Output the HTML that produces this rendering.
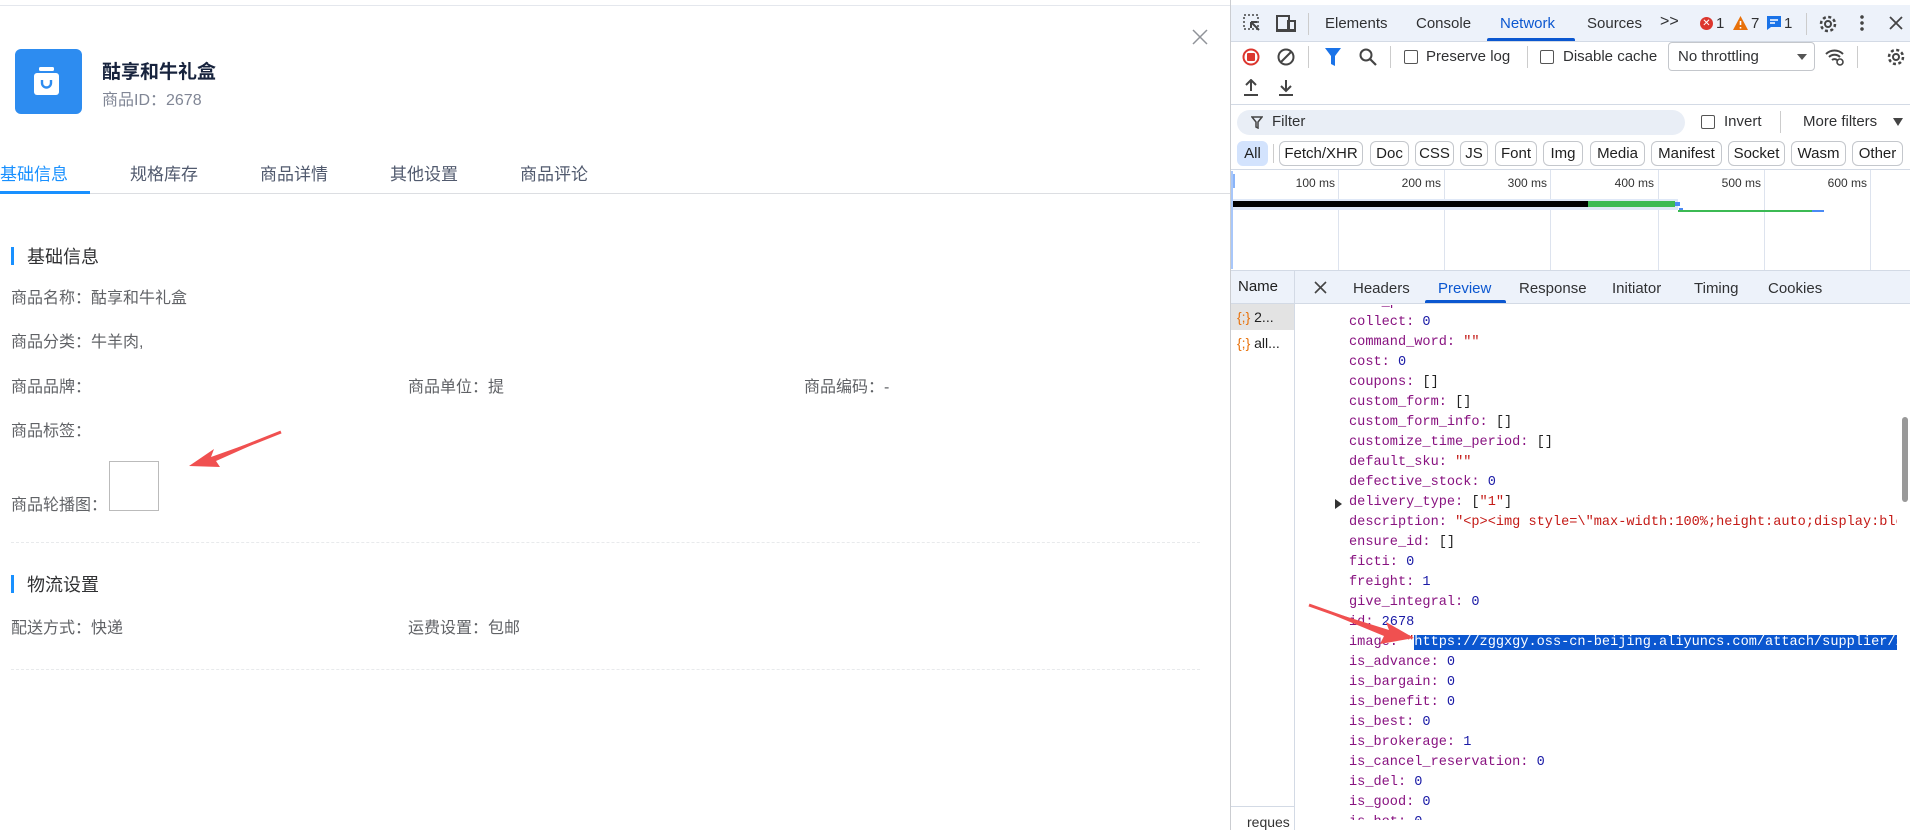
<!DOCTYPE html>
<html><head><meta charset="utf-8"><style>
*{margin:0;padding:0;box-sizing:border-box}
body{width:1910px;height:830px;overflow:hidden;background:#fff;position:relative;font-family:"Liberation Sans","Noto Sans CJK SC",sans-serif;}
.a{position:absolute;white-space:nowrap}
.l{font-size:16px;color:#606266}
.dt{font-size:15px;color:#303133}
.chip{position:absolute;top:141px;height:25px;border:1px solid #c4c7cc;border-radius:6px;font-size:15px;color:#1f1f1f;line-height:23px;text-align:center}
.gl{position:absolute;top:170px;width:1px;height:100px;background:#dde3ee}
.tl{position:absolute;font-size:12px;color:#333;text-align:right;width:60px}
.code{position:absolute;left:1349px;font-family:"Liberation Mono",monospace;font-size:13.6px;line-height:20px;color:#881280;white-space:nowrap}
.n{color:#1a1aa6}.s{color:#c41a16}.b{color:#222}
.cb{position:absolute;width:14px;height:14px;border:1.5px solid #555;border-radius:2px}
</style></head><body>
<div class="a" style="left:0;top:5px;width:1230px;height:1px;background:#e4e7ed"></div>
<svg class="a" style="left:1192px;top:29px" width="16" height="16"><path d="M1 1L15 15M15 1L1 15" stroke="#909399" stroke-width="1.5"/></svg>
<div class="a" style="left:15px;top:49px;width:67px;height:65px;background:#2d8cf0;border-radius:6px"></div>
<svg class="a" style="left:30px;top:62px" width="36" height="40"><rect x="4" y="11" width="25" height="22" rx="3" fill="#fff"/><rect x="9" y="5" width="15" height="4" rx="1.5" fill="#fff"/><path d="M12 18v3a4.5 4.5 0 0 0 9 0v-3" stroke="#2d8cf0" stroke-width="2.4" fill="none"/></svg>
<div class="a" style="left:102px;top:57px;font-size:19px;color:#17233d;font-weight:bold">酤享和牛礼盒</div>
<div class="a" style="left:102px;top:86px;font-size:16px;color:#808695">商品ID：2678</div>
<div class="a" style="left:0;top:160px;font-size:17px;color:#1890ff">基础信息</div>
<div class="a" style="left:130px;top:160px;font-size:17px;color:#515a6e">规格库存</div>
<div class="a" style="left:260px;top:160px;font-size:17px;color:#515a6e">商品详情</div>
<div class="a" style="left:390px;top:160px;font-size:17px;color:#515a6e">其他设置</div>
<div class="a" style="left:520px;top:160px;font-size:17px;color:#515a6e">商品评论</div>
<div class="a" style="left:0;top:193px;width:1230px;height:1px;background:#dcdee2"></div>
<div class="a" style="left:0;top:191px;width:90px;height:3px;background:#1890ff"></div>
<div class="a" style="left:11px;top:247px;width:3px;height:18px;background:#1890ff"></div>
<div class="a" style="left:27px;top:243px;font-size:18px;color:#303133">基础信息</div>
<div class="a l" style="left:11px;top:284px">商品名称：酤享和牛礼盒</div>
<div class="a l" style="left:11px;top:328px">商品分类：牛羊肉,</div>
<div class="a l" style="left:11px;top:373px">商品品牌：</div>
<div class="a l" style="left:408px;top:373px">商品单位：提</div>
<div class="a l" style="left:804px;top:373px">商品编码：-</div>
<div class="a l" style="left:11px;top:417px">商品标签：</div>
<div class="a l" style="left:11px;top:491px">商品轮播图：</div>
<div class="a" style="left:109px;top:461px;width:50px;height:50px;border:1px solid #bbb"></div>
<div class="a" style="left:11px;top:542px;width:1189px;border-top:1px dashed #e8eaec"></div>
<div class="a" style="left:11px;top:575px;width:3px;height:18px;background:#1890ff"></div>
<div class="a" style="left:27px;top:571px;font-size:18px;color:#303133">物流设置</div>
<div class="a l" style="left:11px;top:614px">配送方式：快递</div>
<div class="a l" style="left:408px;top:614px">运费设置：包邮</div>
<div class="a" style="left:11px;top:669px;width:1189px;border-top:1px dashed #e8eaec"></div>
<svg class="a" style="left:180px;top:425px" width="110" height="50"><path d="M101 7L31 32L34 24L9 41L40 42L36 36Z" fill="#f05050"/><path d="M101 7L33 34" stroke="#f05050" stroke-width="3"/></svg>

<div class="a" style="left:1230px;top:0;width:680px;height:830px;background:#fff;border-left:1px solid #cbcdd1"></div>
<div class="a" style="left:1231px;top:5px;width:679px;height:37px;background:#edf2fa;border-bottom:1px solid #d3dae5"></div>
<svg class="a" style="left:1243px;top:14px" width="20" height="20"><rect x="1" y="1" width="14" height="14" fill="none" stroke="#444" stroke-dasharray="2 2" stroke-width="1.5"/><path d="M8 8l8 8M8 8v6M8 8h6" stroke="#444" stroke-width="2" fill="none"/></svg>
<svg class="a" style="left:1276px;top:14px" width="22" height="20"><rect x="1" y="2" width="12" height="14" fill="none" stroke="#444" stroke-width="2"/><rect x="12" y="7" width="7" height="9" fill="none" stroke="#444" stroke-width="2"/><path d="M0 17h20" stroke="#444" stroke-width="2"/></svg>
<div class="a" style="left:1308px;top:13px;width:1px;height:22px;background:#ccc"></div>
<div class="a dt" style="left:1325px;top:15px">Elements</div>
<div class="a dt" style="left:1416px;top:15px">Console</div>
<div class="a dt" style="left:1500px;top:15px;color:#0b57d0">Network</div>
<div class="a" style="left:1487px;top:38px;width:88px;height:3px;background:#0b57d0;border-radius:2px 2px 0 0"></div>
<div class="a dt" style="left:1587px;top:15px">Sources</div>
<div class="a dt" style="left:1660px;top:13px;font-size:16px">&gt;&gt;</div>
<div class="a" style="left:1700px;top:17px;width:13px;height:13px;border-radius:50%;background:#dc362e;color:#fff;font-size:10px;line-height:13px;text-align:center">✕</div>
<div class="a dt" style="left:1716px;top:15px">1</div>
<svg class="a" style="left:1733px;top:16px" width="15" height="14"><path d="M7.5 0L15 14H0Z" fill="#e8710a"/><path d="M7.5 5v4M7.5 11v1.5" stroke="#fff" stroke-width="1.6"/></svg>
<div class="a dt" style="left:1751px;top:15px">7</div>
<svg class="a" style="left:1767px;top:16px" width="14" height="14"><path d="M0 0h14v11H4l-4 3z" fill="#1a73e8"/><path d="M3 4h8M3 7h5" stroke="#fff" stroke-width="1.4"/></svg>
<div class="a dt" style="left:1784px;top:15px">1</div>
<div class="a" style="left:1806px;top:13px;width:1px;height:22px;background:#ccc"></div>
<svg class="a" style="left:1818px;top:14px" width="20" height="20"><circle cx="10" cy="10" r="7" fill="none" stroke="#444" stroke-width="2.5" stroke-dasharray="3 2.5"/><circle cx="10" cy="10" r="3" fill="none" stroke="#444" stroke-width="2"/></svg>
<div class="a" style="left:1860px;top:14px;width:4px;height:18px;background:radial-gradient(circle,#444 1.6px,transparent 2px) 0 0/4px 6px"></div>
<svg class="a" style="left:1889px;top:16px" width="14" height="14"><path d="M1 1L13 13M13 1L1 13" stroke="#444" stroke-width="1.8"/></svg>
<svg class="a" style="left:1242px;top:48px" width="18" height="18"><circle cx="9" cy="9" r="7.5" fill="none" stroke="#dc362e" stroke-width="2"/><rect x="5" y="5" width="8" height="8" rx="1" fill="#dc362e"/></svg>
<svg class="a" style="left:1277px;top:48px" width="18" height="18"><circle cx="9" cy="9" r="7.5" fill="none" stroke="#444" stroke-width="2"/><path d="M4 14L14 4" stroke="#444" stroke-width="2"/></svg>
<div class="a" style="left:1308px;top:46px;width:1px;height:22px;background:#ccc"></div>
<svg class="a" style="left:1325px;top:48px" width="16" height="18"><path d="M0 0h16L10 8v10L6 16V8Z" fill="#1a73e8"/></svg>
<svg class="a" style="left:1359px;top:48px" width="18" height="18"><circle cx="7" cy="7" r="5.5" fill="none" stroke="#444" stroke-width="2"/><path d="M11 11l6 6" stroke="#444" stroke-width="2.2"/></svg>
<div class="a" style="left:1390px;top:46px;width:1px;height:22px;background:#ccc"></div>
<div class="cb" style="left:1404px;top:50px"></div>
<div class="a dt" style="left:1426px;top:48px">Preserve log</div>
<div class="a" style="left:1527px;top:46px;width:1px;height:22px;background:#ccc"></div>
<div class="cb" style="left:1540px;top:50px"></div>
<div class="a dt" style="left:1563px;top:48px">Disable cache</div>
<div class="a" style="left:1668px;top:42px;width:147px;height:29px;border:1px solid #c4c7cc;border-radius:4px"></div>
<div class="a dt" style="left:1678px;top:48px">No throttling</div>
<svg class="a" style="left:1797px;top:54px" width="10" height="6"><path d="M0 0h10L5 6z" fill="#555"/></svg>
<svg class="a" style="left:1824px;top:47px" width="22" height="20"><path d="M2 7a12 12 0 0 1 17 0M5 10a8 8 0 0 1 11 0M8 13a4 4 0 0 1 5 0" stroke="#444" stroke-width="2" fill="none"/><circle cx="16" cy="15" r="3" fill="none" stroke="#444" stroke-width="1.6"/></svg>
<div class="a" style="left:1857px;top:46px;width:1px;height:22px;background:#ccc"></div>
<svg class="a" style="left:1886px;top:47px" width="20" height="20"><circle cx="10" cy="10" r="7" fill="none" stroke="#444" stroke-width="2.5" stroke-dasharray="3 2.5"/><circle cx="10" cy="10" r="3" fill="none" stroke="#444" stroke-width="2"/></svg>
<svg class="a" style="left:1243px;top:79px" width="16" height="18"><path d="M8 1v11M3 6l5-5 5 5M1 16h14" stroke="#444" stroke-width="2" fill="none"/></svg>
<svg class="a" style="left:1278px;top:79px" width="16" height="18"><path d="M8 1v11M3 7l5 5 5-5M1 16h14" stroke="#444" stroke-width="2" fill="none"/></svg>
<div class="a" style="left:1231px;top:104px;width:679px;height:1px;background:#d3dae5"></div>
<div class="a" style="left:1237px;top:110px;width:448px;height:25px;border-radius:13px;background:#e9eef6"></div>
<svg class="a" style="left:1251px;top:116px" width="12" height="13"><path d="M1 1h10L7 6v6L5 11V6Z" fill="none" stroke="#444" stroke-width="1.5"/></svg>
<div class="a dt" style="left:1272px;top:113px">Filter</div>
<div class="cb" style="left:1701px;top:115px"></div>
<div class="a dt" style="left:1724px;top:113px">Invert</div>
<div class="a" style="left:1780px;top:111px;width:1px;height:22px;background:#ccc"></div>
<div class="a dt" style="left:1803px;top:113px">More filters</div>
<svg class="a" style="left:1893px;top:118px" width="10" height="8"><path d="M0 0h10L5 8z" fill="#444"/></svg>
<div class="chip" style="left:1237px;width:31px;background:#d3e3fd;border-color:#d3e3fd">All</div>
<div class="a" style="left:1273px;top:144px;width:1px;height:19px;background:#ccc"></div>
<div class="chip" style="left:1279px;width:84px">Fetch/XHR</div>
<div class="chip" style="left:1370px;width:39px">Doc</div>
<div class="chip" style="left:1415px;width:39px">CSS</div>
<div class="chip" style="left:1460px;width:28px">JS</div>
<div class="chip" style="left:1495px;width:42px">Font</div>
<div class="chip" style="left:1543px;width:40px">Img</div>
<div class="chip" style="left:1590px;width:55px">Media</div>
<div class="chip" style="left:1651px;width:71px">Manifest</div>
<div class="chip" style="left:1728px;width:57px">Socket</div>
<div class="chip" style="left:1791px;width:55px">Wasm</div>
<div class="chip" style="left:1852px;width:51px">Other</div>
<div class="a" style="left:1231px;top:169px;width:679px;height:1px;background:#d3dae5"></div>
<div class="gl" style="left:1338px"></div><div class="gl" style="left:1444px"></div><div class="gl" style="left:1550px"></div><div class="gl" style="left:1658px"></div><div class="gl" style="left:1764px"></div><div class="gl" style="left:1870px"></div>
<div class="a" style="left:1231px;top:171px;width:2px;height:98px;background:#a8c7fa"></div>
<div class="a" style="left:1233px;top:174px;width:2px;height:14px;background:#8ab4f8"></div>
<div class="tl" style="left:1275px;top:176px">100 ms</div><div class="tl" style="left:1381px;top:176px">200 ms</div><div class="tl" style="left:1487px;top:176px">300 ms</div><div class="tl" style="left:1594px;top:176px">400 ms</div><div class="tl" style="left:1701px;top:176px">500 ms</div><div class="tl" style="left:1807px;top:176px">600 ms</div>
<div class="a" style="left:1233px;top:199px;width:445px;height:11px;background:#dfe8f7"></div>
<div class="a" style="left:1233px;top:201px;width:355px;height:6px;background:#000"></div>
<div class="a" style="left:1588px;top:201px;width:87px;height:6px;background:#3cba54"></div>
<div class="a" style="left:1675px;top:202px;width:5px;height:4px;background:#4a8af4"></div>
<div class="a" style="left:1679px;top:208px;width:4px;height:2px;background:#4a8af4"></div>
<div class="a" style="left:1678px;top:210px;width:135px;height:2px;background:#3cba54"></div>
<div class="a" style="left:1812px;top:210px;width:12px;height:2px;background:#4a8af4"></div>
<div class="a" style="left:1231px;top:270px;width:679px;height:1px;background:#d3dae5"></div>
<div class="a" style="left:1231px;top:271px;width:679px;height:33px;background:#edf2fa;border-bottom:1px solid #d3dae5"></div>
<div class="a" style="left:1294px;top:271px;width:1px;height:559px;background:#d3dae5"></div>
<div class="a" style="left:1231px;top:304px;width:63px;height:26px;background:#e3e3e3"></div>
<div class="a dt" style="left:1238px;top:278px;color:#1f1f1f">Name</div>
<svg class="a" style="left:1314px;top:281px" width="13" height="13"><path d="M1 1L12 12M12 1L1 12" stroke="#444" stroke-width="1.6"/></svg>
<div class="a dt" style="left:1353px;top:280px">Headers</div>
<div class="a dt" style="left:1438px;top:280px;color:#0b57d0">Preview</div>
<div class="a" style="left:1425px;top:300px;width:81px;height:3px;background:#0b57d0;border-radius:2px 2px 0 0"></div>
<div class="a dt" style="left:1519px;top:280px">Response</div>
<div class="a dt" style="left:1612px;top:280px">Initiator</div>
<div class="a dt" style="left:1694px;top:280px">Timing</div>
<div class="a dt" style="left:1768px;top:280px">Cookies</div>
<div class="a" style="left:1237px;top:309px;font-size:14px;color:#1f1f1f"><span style="color:#e8710a">{;}</span> 2...</div>
<div class="a" style="left:1237px;top:335px;font-size:14px;color:#1f1f1f"><span style="color:#e8710a">{;}</span> all...</div>
<div class="a" style="left:1231px;top:806px;width:63px;height:1px;background:#d3dae5"></div>
<div class="a" style="left:1247px;top:814px;font-size:14px;color:#333">reques</div>
<div style="position:absolute;left:1295px;top:305px;width:602px;height:515px;overflow:hidden">
<div class="code" style="left:54px;top:-12px">
code_path:<br>
collect: <span class="n">0</span><br>
command_word: <span class="s">""</span><br>
cost: <span class="n">0</span><br>
coupons: <span class="b">[]</span><br>
custom_form: <span class="b">[]</span><br>
custom_form_info: <span class="b">[]</span><br>
customize_time_period: <span class="b">[]</span><br>
default_sku: <span class="s">""</span><br>
defective_stock: <span class="n">0</span><br>
delivery_type: <span class="b">[<span class="s">"1"</span>]</span><br>
description: <span class="s">"&lt;p&gt;&lt;img style=\"max-width:100%;height:auto;display:bloc</span><br>
ensure_id: <span class="b">[]</span><br>
ficti: <span class="n">0</span><br>
freight: <span class="n">1</span><br>
give_integral: <span class="n">0</span><br>
id: <span class="n">2678</span><br>
image: <span class="s">"</span><span style="background:#0b57d0;color:#fff">https://zggxgy.oss-cn-beijing.aliyuncs.com/attach/supplier/20</span><br>
is_advance: <span class="n">0</span><br>
is_bargain: <span class="n">0</span><br>
is_benefit: <span class="n">0</span><br>
is_best: <span class="n">0</span><br>
is_brokerage: <span class="n">1</span><br>
is_cancel_reservation: <span class="n">0</span><br>
is_del: <span class="n">0</span><br>
is_good: <span class="n">0</span><br>
is_hot: <span class="n">0</span>
</div>
<svg class="a" style="left:40px;top:194px" width="8" height="10"><path d="M0 0l7 5-7 5z" fill="#333"/></svg>
</div>
<div class="a" style="left:1898px;top:305px;width:12px;height:520px;background:#fff"></div>
<div class="a" style="left:1902px;top:417px;width:6px;height:85px;background:#999;border-radius:3px"></div>
<svg class="a" style="left:1306px;top:600px" width="115" height="45"><path d="M3 5L83 30L80 22L108 38L74 44L78 36Z" fill="#f05050"/><path d="M3 5L82 33" stroke="#f05050" stroke-width="3"/></svg>
</body></html>
